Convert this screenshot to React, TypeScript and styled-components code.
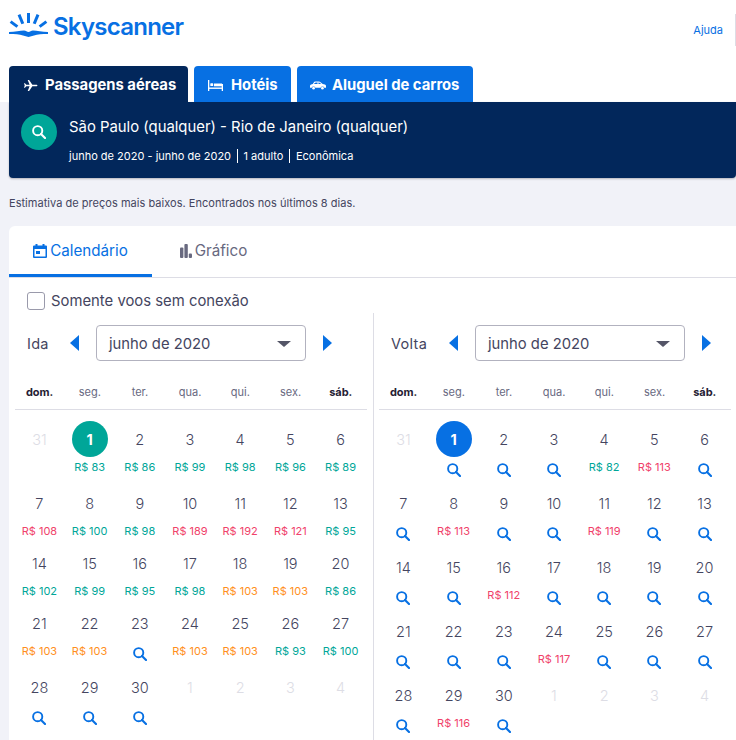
import React from "react";
import * as styledComponents from "styled-components";

const styled = styledComponents.default;
const { createGlobalStyle } = styledComponents;

type Tone = "green" | "red" | "orange";

type Day = {
  day: number;
  price?: number;
  tone?: Tone;
  muted?: boolean;
  selected?: boolean;
};

const weekdays = ["dom.", "seg.", "ter.", "qua.", "qui.", "sex.", "sáb."];

const toneColors: Record<Tone, string> = {
  green: "#00a698",
  red: "#f0426a",
  orange: "#ff8f1c",
};

// the days with no price only get the search icon
const muted = (day: number): Day => ({ day, muted: true });
const g = (day: number, price: number): Day => ({ day, price, tone: "green" });
const r = (day: number, price: number): Day => ({ day, price, tone: "red" });
const o = (day: number, price: number): Day => ({ day, price, tone: "orange" });
const s = (day: number): Day => ({ day });

const outbound: Day[] = [
  muted(31), { ...g(1, 83), selected: true }, g(2, 86), g(3, 99), g(4, 98), g(5, 96), g(6, 89),
  r(7, 108), g(8, 100), g(9, 98), r(10, 189), r(11, 192), r(12, 121), g(13, 95),
  g(14, 102), g(15, 99), g(16, 95), g(17, 98), o(18, 103), o(19, 103), g(20, 86),
  o(21, 103), o(22, 103), s(23), o(24, 103), o(25, 103), g(26, 93), g(27, 100),
  s(28), s(29), s(30), muted(1), muted(2), muted(3), muted(4),
];

const inbound: Day[] = [
  muted(31), { ...s(1), selected: true }, s(2), s(3), g(4, 82), r(5, 113), s(6),
  s(7), r(8, 113), s(9), s(10), r(11, 119), s(12), s(13),
  s(14), s(15), r(16, 112), s(17), s(18), s(19), s(20),
  s(21), s(22), s(23), r(24, 117), s(25), s(26), s(27),
  s(28), r(29, 116), s(30), muted(1), muted(2), muted(3), muted(4),
];

function SearchIcon({ color = "#0770e3" }: { color?: string }) {
  return (
    <svg width="14" height="14" viewBox="0 0 14 14" fill="none" stroke={color}>
      <circle cx="5.7" cy="5.7" r="4.6" strokeWidth="1.9" />
      <path d="M9 9l4 4" strokeWidth="2.2" strokeLinecap="round" />
    </svg>
  );
}

function Logo() {
  return (
    <svg width="39" height="24" viewBox="0 0 39 24" fill="#0770e3">
      <g stroke="#0770e3" strokeWidth="3">
        <path d="M19.5 0v10" />
        <path d="M10 1.6l3.8 9.2" />
        <path d="M29 1.6l-3.8 9.2" />
        <path d="M1.6 8.6l6.8 5" />
        <path d="M37.4 8.6l-6.8 5" />
      </g>
      <path d="M0 19C6 18.800 11 17.400 15 17.400c2 0 3 1.600 4.500 1.600s2.500-1.600 4.500-1.600c4 0 9 1.400 15 1.600v2c-6 0-10.500.2-14 1.600L19.500 24 14 22.600C10.500 21.200 6 21 0 21z" />
    </svg>
  );
}

function PlaneIcon() {
  return (
    <svg width="15" height="13" viewBox="0 0 16 14" fill="#fff">
      <path d="M1 4.500h1l1.500 1.700H7L5 1h1.500L10 6.200h4c1 0 1.500.3 1.500.8s-.5.8-1.500.8h-4L6.500 13H5l2-5.200H3.500L2 9.500H1L1.800 7z" />
    </svg>
  );
}

function BedIcon() {
  return (
    <svg width="15" height="11" viewBox="0 0 15 11" fill="#fff">
      <path d="M0 0h1.300v11H0z" />
      <path d="M13.700 4h1.300v7h-1.300z" />
      <path d="M1 7.500h13v1.400H1z" />
      <path d="M6 3.500h8v2.800H6z" />
      <rect x="2.300" y="3.300" width="2.900" height="2.800" rx=".6" />
    </svg>
  );
}

function CarIcon() {
  return (
    <svg width="16" height="9" viewBox="0 0 17 9" fill="#fff">
      <path
        fillRule="evenodd"
        d="M4.500 .5C6.500 0 9 0 10.500 .5L13.500 3l2.300.5c.8.2 1.200.7 1.200 1.400V7h-1.800a2 2 0 0 0-3.900 0H5.700a2 2 0 0 0-3.900 0H0V5c0-.8.4-1.300 1.200-1.500L3 3zM5.400 1.500L4.200 3H8V1.300c-1 0-1.800 0-2.600.2zM9 1.300V3h3l-1.900-1.500c-.3-.1-.7-.2-1.100-.2z"
      />
      <circle cx="3.800" cy="7.300" r="1.400" />
      <circle cx="13.200" cy="7.300" r="1.400" />
    </svg>
  );
}

function CalendarIcon() {
  return (
    <svg width="14" height="14" viewBox="0 0 14 14" fill="#0770e3">
      <path d="M2.500 0h2v1.500h5V0h2v1.500H13a1 1 0 0 1 1 1V13a1 1 0 0 1-1 1H1a1 1 0 0 1-1-1V2.500a1 1 0 0 1 1-1h1.500zM1.500 5v7.500h11V5z" />
      <rect x="3" y="7" width="4" height="3" />
    </svg>
  );
}

function BarsIcon() {
  return (
    <svg width="12" height="14" viewBox="0 0 12 14" fill="#68697f">
      <rect x="0" y="3.500" width="3.400" height="10.500" rx="1" />
      <rect x="4.400" y="0" width="3.400" height="14" rx="1" />
      <rect x="8.800" y="9.500" width="3.200" height="4.500" rx="1" />
    </svg>
  );
}

function MonthCalendar({
  label,
  labelWidth,
  days,
  accent,
  rows,
}: {
  label: string;
  labelWidth: number;
  days: Day[];
  accent: string;
  rows: string;
}) {
  return (
    <Month>
      <MonthNav>
        <MonthLabel $width={labelWidth}>{label}</MonthLabel>
        <Arrow $dir="left" aria-label="Mês anterior" />
        <MonthSelect>
          <span>junho de 2020</span>
          <Caret />
        </MonthSelect>
        <Arrow $dir="right" aria-label="Próximo mês" />
      </MonthNav>
      <WeekHead>
        {weekdays.map((w, i) => (
          <WeekDay key={w} $weekend={i === 0 || i === 6}>
            {w}
          </WeekDay>
        ))}
      </WeekHead>
      <DayGrid $rows={rows}>
        {days.map((d, i) => (
          <DayCell key={i}>
            <DayNumber $muted={d.muted} $accent={d.selected ? accent : undefined}>
              {d.day}
            </DayNumber>
            {d.price !== undefined && d.tone ? (
              <Price $tone={d.tone}>R$ {d.price}</Price>
            ) : (
              !d.muted && (
                <IconSlot>
                  <SearchIcon />
                </IconSlot>
              )
            )}
          </DayCell>
        ))}
      </DayGrid>
    </Month>
  );
}

export default function App() {
  return (
    <Page>
      <GlobalStyle />
      <Header>
        <Brand>
          <Logo />
          <BrandName>Skyscanner</BrandName>
        </Brand>
        <HelpLink>Ajuda</HelpLink>
      </Header>

      <Products>
        <ProductTab $active $width={179} $inset={14} $gap={7}>
          <PlaneIcon />
          Passagens aéreas
        </ProductTab>
        <ProductTab $width={97} $inset={14} $gap={8}>
          <BedIcon />
          Hotéis
        </ProductTab>
        <ProductTab $width={176} $inset={13} $gap={6}>
          <CarIcon />
          Aluguel de carros
        </ProductTab>
      </Products>

      <Main>
        <Summary>
          <SummaryBadge>
            <SearchIcon color="#fff" />
          </SummaryBadge>
          <SummaryText>
            <SummaryTitle>São Paulo (qualquer) - Rio de Janeiro (qualquer)</SummaryTitle>
            <SummaryMeta>
              <MetaItem>junho de 2020 - junho de 2020</MetaItem>
              <MetaItem>1 adulto</MetaItem>
              <MetaItem>Econômica</MetaItem>
            </SummaryMeta>
          </SummaryText>
        </Summary>

        <Note>Estimativa de preços mais baixos. Encontrados nos últimos 8 dias.</Note>

        <Card>
          <ViewTabs>
            <ViewTab $active>
              <CalendarIcon />
              Calendário
            </ViewTab>
            <ViewTab>
              <BarsIcon />
              Gráfico
            </ViewTab>
          </ViewTabs>

          <DirectOnly>
            <Checkbox />
            Somente voos sem conexão
          </DirectOnly>

          <Months>
            <MonthCalendar
              label="Ida"
              labelWidth={43}
              days={outbound}
              accent="#00a698"
              rows="64px 60px 60px 64px 64px"
            />
            <MonthCalendar
              label="Volta"
              labelWidth={58}
              days={inbound}
              accent="#0770e3"
              rows="repeat(5, 64px)"
            />
          </Months>
        </Card>
      </Main>
    </Page>
  );
}

const GlobalStyle = createGlobalStyle`
  html, body {
    margin: 0;
    height: 740px;
    overflow: hidden;
    background: #f1f2f8;
  }
  * {
    box-sizing: border-box;
  }
`;

const Page = styled.div`
  width: 736px;
  height: 740px;
  overflow: hidden;
  font-family: Inter, "Liberation Sans", sans-serif;
  color: #444560;
`;

const Header = styled.header`
  display: flex;
  align-items: flex-start;
  justify-content: space-between;
  height: 66px;
  padding: 13px 0 0 9px;
  background: #fff;
`;

const Brand = styled.div`
  display: flex;
  gap: 5px;
`;

const BrandName = styled.span`
  font-size: 24px;
  line-height: 28px;
  font-weight: 600;
  letter-spacing: -0.75px;
  color: #0770e3;
`;

const HelpLink = styled.a`
  display: block;
  height: 32px;
  margin-top: 1px;
  padding-right: 12px;
  border-right: 1px solid #dddde5;
  font-size: 11px;
  line-height: 32px;
  color: #0770e3;
`;

const Products = styled.nav`
  display: flex;
  gap: 6px;
  height: 36px;
  padding-left: 9px;
  background: #fff;
`;

const ProductTab = styled.div<{
  $active?: boolean;
  $width: number;
  $inset: number;
  $gap: number;
}>`
  display: flex;
  align-items: center;
  gap: ${(p) => p.$gap}px;
  width: ${(p) => p.$width}px;
  padding: 2px 0 0 ${(p) => p.$inset}px;
  border-radius: 4px 4px 0 0;
  background: ${(p) => (p.$active ? "#02275b" : "#0770e3")};
  color: #fff;
  font-size: 14.8px;
  font-weight: 700;
  white-space: nowrap;
`;

const Main = styled.main`
  padding-left: 9px;
`;

const Summary = styled.section`
  display: flex;
  gap: 12px;
  height: 76px;
  padding: 12px 12px 0;
  border-radius: 0 0 4px 4px;
  background: #02275b;
  box-shadow: 0 1px 2px rgba(37, 32, 51, 0.3);
  color: #fff;
`;

const SummaryBadge = styled.div`
  display: flex;
  align-items: center;
  justify-content: center;
  width: 36px;
  height: 36px;
  border-radius: 50%;
  background: #00a698;
`;

const SummaryText = styled.div`
  display: flex;
  flex-direction: column;
`;

const SummaryTitle = styled.div`
  font-size: 14.87px;
  line-height: 26px;
`;

const SummaryMeta = styled.div`
  display: flex;
  margin-top: 9px;
  font-size: 11px;
  line-height: 14px;
`;

const MetaItem = styled.span`
  padding-right: 5.5px;
  margin-right: 6px;
  border-right: 1px solid #fff;

  &:last-child {
    border-right: 0;
  }
`;

const Note = styled.p`
  margin: 18px 0 0 0;
  font-size: 11px;
  line-height: 14px;
  letter-spacing: 0.03px;
  color: #444560;
`;

const Card = styled.section`
  margin-top: 16px;
  height: 600px;
  border-radius: 6px 0 0 0;
  background: #fff;
`;

const ViewTabs = styled.div`
  display: flex;
  height: 52px;
  border-bottom: 1px solid #dddde5;
`;

const ViewTab = styled.div<{ $active?: boolean }>`
  display: flex;
  align-items: center;
  justify-content: center;
  gap: 3px;
  width: 143px;
  height: 51px;
  padding-top: 1px;
  border-bottom: 3px solid ${(p) => (p.$active ? "#0770e3" : "transparent")};
  color: ${(p) => (p.$active ? "#0770e3" : "#68697f")};
  font-size: 15.2px;

  & + & {
    width: 123px;
  }
`;

const DirectOnly = styled.label`
  display: flex;
  align-items: center;
  gap: 6px;
  height: 35px;
  padding: 14px 0 3px 18px;
  font-size: 14.85px;
  color: #444560;
`;

const Checkbox = styled.span`
  width: 18px;
  height: 18px;
  border: 1px solid #9a9aab;
  border-radius: 3px;
  background: #fff;
`;

const Months = styled.div`
  display: grid;
  grid-template-columns: 364px 363px;
`;

const Month = styled.div`
  padding: 12px 0 0 18px;

  & + & {
    padding-left: 17px;
    border-left: 1px solid #dddde5;
  }
`;

const MonthNav = styled.div`
  display: flex;
  align-items: center;
  height: 36px;
`;

const MonthLabel = styled.span<{ $width: number }>`
  width: ${(p) => p.$width}px;
  font-size: 14.5px;
  letter-spacing: 0.3px;
  color: #444560;
`;

const Arrow = styled.button<{ $dir: "left" | "right" }>`
  width: 0;
  height: 0;
  padding: 0;
  background: none;
  border-style: solid;
  border-width: 8px 0 8px 9px;
  border-color: transparent transparent transparent #0770e3;
  transform: ${(p) => (p.$dir === "left" ? "scaleX(-1)" : "none")};
`;

const MonthSelect = styled.div`
  display: flex;
  align-items: center;
  justify-content: space-between;
  width: 210px;
  height: 36px;
  margin: 0 17px;
  padding: 1px 14px 0 12px;
  border: 1px solid #b2b2bf;
  border-radius: 4px;
  font-size: 14.8px;
  color: #444560;
`;

const Caret = styled.span`
  width: 0;
  height: 0;
  border-style: solid;
  border-width: 6px 7px 0 7px;
  border-color: #545567 transparent transparent transparent;
`;

const WeekHead = styled.div`
  display: grid;
  grid-template-columns: repeat(7, 50.2px);
  width: 352px;
  height: 37px;
  margin: 12px 0 11px -12px;
  border-bottom: 1px solid #dddde5;
  font-size: 11px;
  line-height: 14px;
  text-align: center;
`;

const WeekDay = styled.span<{ $weekend: boolean }>`
  padding-top: 12px;
  margin-left: -1px;
  font-weight: ${(p) => (p.$weekend ? 700 : 400)};
  color: ${(p) => (p.$weekend ? "#252033" : "#68697f")};
`;

const DayGrid = styled.div<{ $rows: string }>`
  display: grid;
  grid-template-columns: repeat(7, 50.2px);
  grid-template-rows: ${(p) => p.$rows};
  margin-left: -12.7px;
`;

const DayCell = styled.div`
  display: flex;
  flex-direction: column;
  align-items: center;
`;

const DayNumber = styled.span<{ $muted?: boolean; $accent?: string }>`
  display: flex;
  align-items: center;
  justify-content: center;
  width: 36px;
  height: 36px;
  border-radius: 50%;
  background: ${(p) => p.$accent ?? "transparent"};
  color: ${(p) => (p.$accent ? "#fff" : p.$muted ? "#dddde5" : "#444560")};
  font-size: 14.5px;
  font-weight: ${(p) => (p.$accent ? 700 : 300)};
`;

const Price = styled.span<{ $tone: Tone }>`
  font-size: 11px;
  line-height: 20px;
  white-space: nowrap;
  color: ${(p) => toneColors[p.$tone]};
`;

const IconSlot = styled.span`
  display: flex;
  height: 14px;
  margin-top: 6px;
`;
